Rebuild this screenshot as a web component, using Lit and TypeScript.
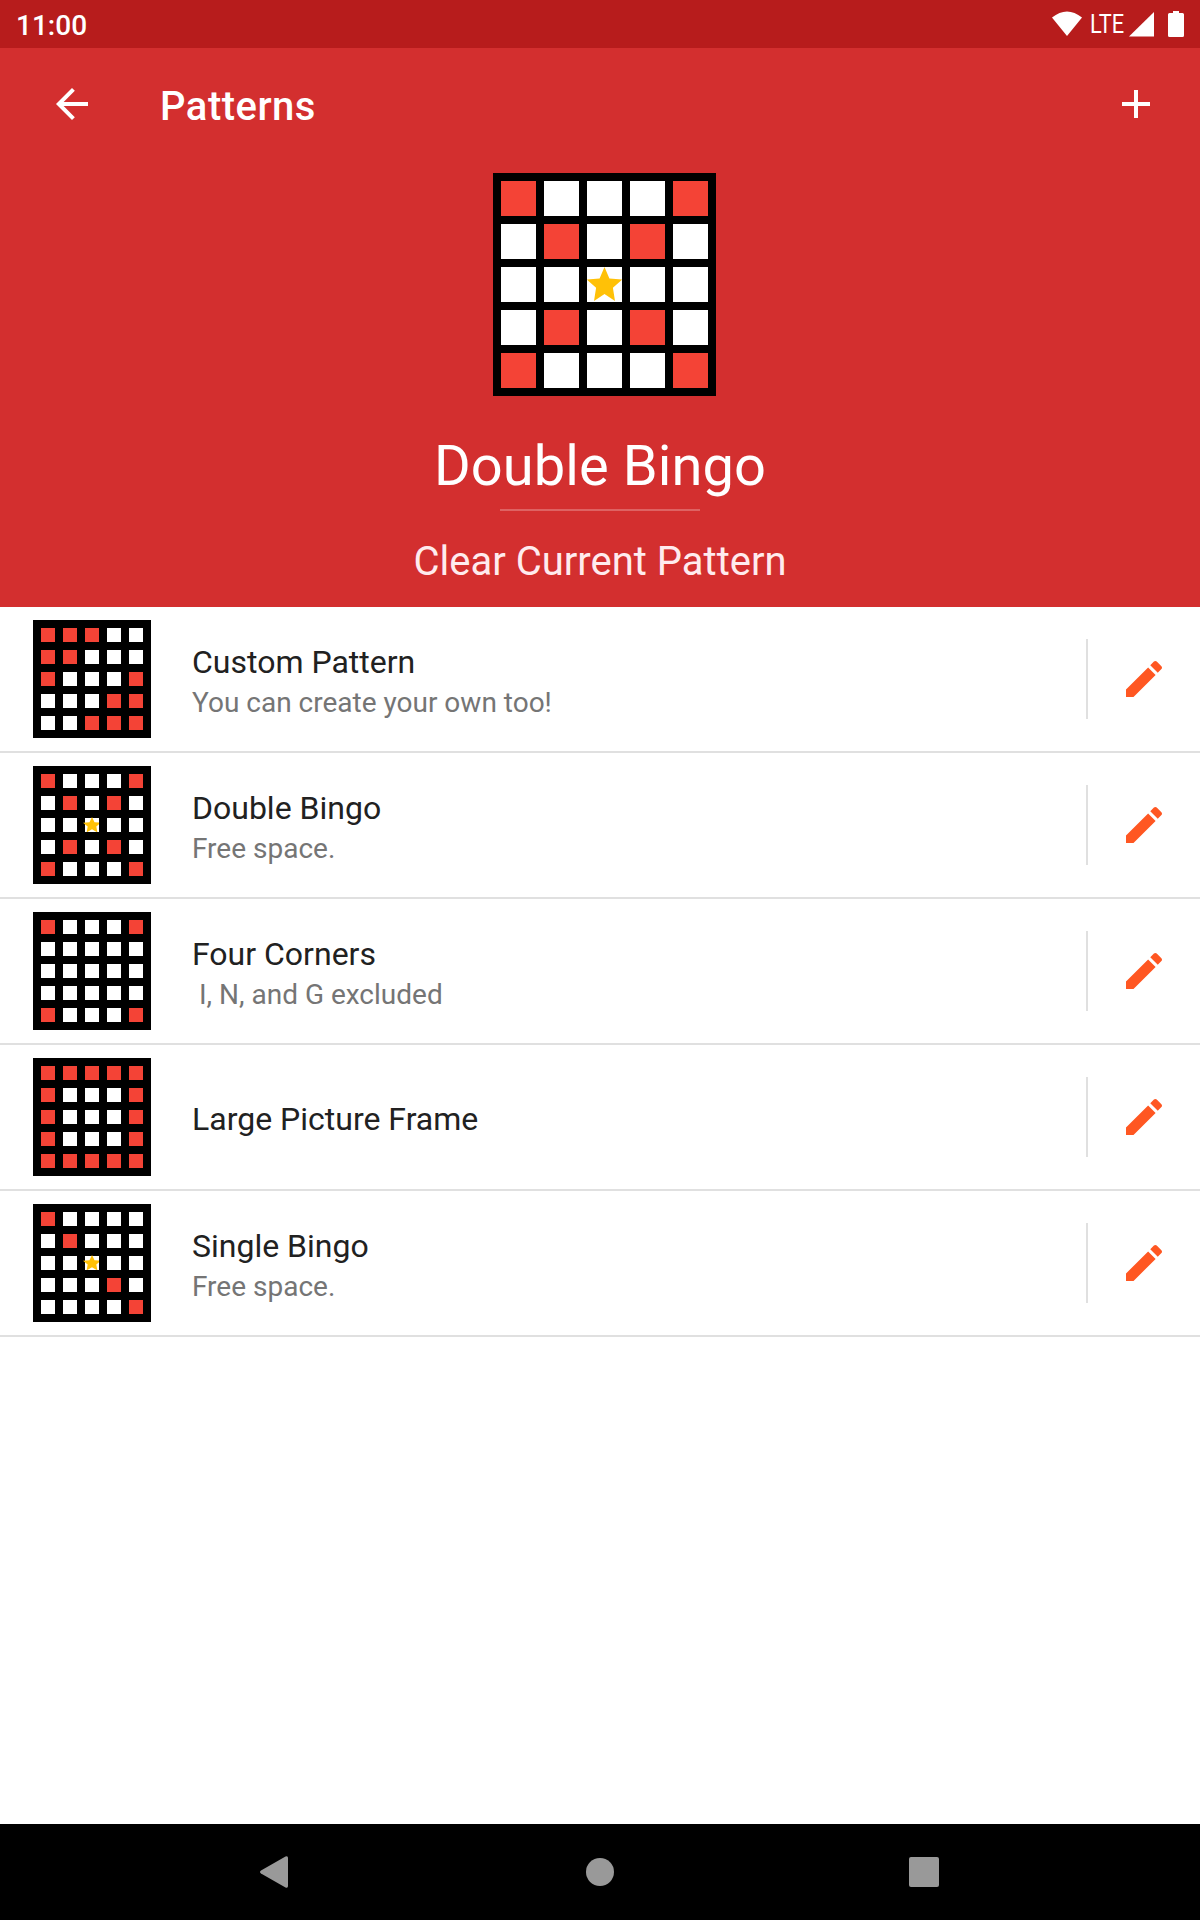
import { LitElement, html, css } from "lit";
import { customElement, property } from "lit/decorators.js";
import { classMap } from "lit/directives/class-map.js";

interface Pattern {
  name: string;
  note?: string;
  cells: string[];
}

// "x" marks a called square, "*" the free space, "." an open square.
const PATTERNS: Pattern[] = [
  { name: "Custom Pattern", note: "You can create your own too!", cells: ["xxx..", "xx...", "x...x", "...xx", "..xxx"] },
  { name: "Double Bingo", note: "Free space.", cells: ["x...x", ".x.x.", "..*..", ".x.x.", "x...x"] },
  { name: "Four Corners", note: " I, N, and G excluded", cells: ["x...x", ".....", ".....", ".....", "x...x"] },
  { name: "Large Picture Frame", cells: ["xxxxx", "x...x", "x...x", "x...x", "xxxxx"] },
  { name: "Single Bingo", note: "Free space.", cells: ["x....", ".x...", "..*..", "...x.", "....x"] },
];

@customElement("pattern-grid")
class PatternGrid extends LitElement {
  @property({ attribute: false }) cells: string[] = [];
  @property({ type: Boolean, reflect: true }) large = false;

  static styles = css`
    :host { display: block; flex: none; --cell: 14px; --star-w: 16px; --star-h: 15px; }
    :host([large]) { --cell: 35px; --star-w: 35px; --star-h: 35px; }
    .grid {
      display: grid;
      grid-template-columns: repeat(5, var(--cell));
      grid-auto-rows: var(--cell);
      gap: 8px;
      padding: 8px;
      background: #000;
    }
    .cell { display: flex; align-items: flex-end; justify-content: flex-end; background: #fff; }
    .called { background: #f44336; }
    .star { flex: none; width: var(--star-w); height: var(--star-h); }
  `;

  render() {
    return html`<div class="grid">
      ${this.cells.join("").split("").map(
        (c) => html`<div class=${classMap({ cell: true, called: c === "x" })}>
          ${c === "*"
            ? html`<svg class="star" preserveAspectRatio="none" viewBox=${this.large ? "0 0 35 35" : "0 0 31.1 33"}>
                <path fill="#ffc107" d="M17.5 0 22.4 11.4 35.2 12.6 25.9 20.7 28 34 17.5 27 7 34 9.1 20.7-.2 12.6 12.6 11.4z" />
              </svg>`
            : ""}
        </div>`
      )}
    </div>`;
  }
}

@customElement("pattern-row")
class PatternRow extends LitElement {
  @property({ attribute: false }) pattern!: Pattern;

  static styles = css`
    :host { display: block; }
    .row { display: flex; align-items: center; height: 144px; padding-left: 33px; border-bottom: 2px solid #e0e0e0; }
    .text { flex: 1; padding: 4px 0 0 41px; }
    .name { font-size: 32px; line-height: 38px; color: #212121; }
    .note { font-size: 28px; line-height: 33px; margin-top: 5px; color: #757575; white-space: pre; }
    .edit { display: flex; align-items: center; justify-content: center; width: 112px; height: 80px; border-left: 2px solid #e0e0e0; }
    svg { width: 48px; height: 48px; }
  `;

  render() {
    const { name, note, cells } = this.pattern;
    return html`<div class="row">
      <pattern-grid .cells=${cells}></pattern-grid>
      <div class="text">
        <div class="name">${name}</div>
        ${note ? html`<div class="note">${note}</div>` : ""}
      </div>
      <div class="edit">
        <svg viewBox="0 0 24 24" fill="#ff5722">
          <path d="M3 17.25V21h3.75L17.81 9.94l-3.75-3.75L3 17.25zM20.71 7.04c.39-.39.39-1.02 0-1.41l-2.34-2.34c-.39-.39-1.02-.39-1.41 0l-1.83 1.83 3.75 3.75 1.83-1.83z" />
        </svg>
      </div>
    </div>`;
  }
}

@customElement("app-root")
class AppRoot extends LitElement {
  static styles = css`
    :host { display: block; font-family: Roboto, "Liberation Sans", sans-serif; }
    .screen { display: flex; flex-direction: column; height: 1920px; background: #fff; overflow: hidden; }
    .status { display: flex; align-items: center; flex: none; height: 48px; background: #b71c1c; color: #fff; }
    .time { flex: 1; padding: 3px 0 0 16px; font-size: 28px; font-weight: 500; line-height: 45px; }
    .status svg { flex: none; height: 48px; }
    .lte { flex: none; width: 35px; margin-left: 8px; padding-top: 2px; font-size: 25px; line-height: 46px; white-space: nowrap; transform: scaleX(0.87); transform-origin: left; }
    .header { flex: none; height: 559px; background: #d32f2f; color: #fff; }
    .bar { display: flex; align-items: center; height: 112px; padding: 0 40px 0 48px; }
    .bar svg { width: 48px; height: 48px; }
    .title { flex: 1; padding: 5px 0 0 64px; font-size: 40px; line-height: 47px; font-weight: 500; letter-spacing: 0.5px; }
    .hero { display: flex; flex-direction: column; align-items: center; padding-top: 13px; }
    .hero pattern-grid { margin-left: 9px; }
    .current { margin-top: 37px; font-size: 56px; line-height: 66px; letter-spacing: 0.1px; }
    .rule { width: 200px; height: 2px; margin-top: 10px; background: rgba(255, 255, 255, 0.25); }
    .clear { margin-top: 27px; font-size: 40px; line-height: 47px; color: #ffebee; }
    .list { flex: 1; }
    .nav { flex: none; height: 96px; background: #000; }
    .nav svg { display: block; width: 1200px; height: 96px; }
  `;

  render() {
    return html`<div class="screen">
      <div class="status">
        <div class="time">11:00</div>
        <svg width="30" viewBox="0 0 30 48" fill="#fff"><path d="M0 17.5Q15 5.500 30 17.500L15 36z" /></svg>
        <span class="lte">LTE</span>
        <svg width="75" viewBox="1125 0 75 48" fill="#fff">
          <path d="M1154 12v24.500h-25z" />
          <path d="M1173 11h6v2h3.500a1.500 1.500 0 0 1 1.500 1.500v21a1.500 1.500 0 0 1-1.500 1.500h-13a1.500 1.500 0 0 1-1.500-1.500v-21a1.500 1.500 0 0 1 1.500-1.500h3.500z" />
        </svg>
      </div>
      <div class="header">
        <div class="bar">
          <svg viewBox="0 0 24 24" fill="#fff"><path d="M20 11H7.830l5.590-5.590L12 4l-8 8 8 8 1.410-1.410L7.830 13H20v-2z" /></svg>
          <div class="title">Patterns</div>
          <svg viewBox="0 0 24 24" fill="#fff"><path d="M19 13h-6v6h-2v-6H5v-2h6V5h2v6h6v2z" /></svg>
        </div>
        <div class="hero">
          <pattern-grid large .cells=${PATTERNS[1].cells}></pattern-grid>
          <div class="current">Double Bingo</div>
          <div class="rule"></div>
          <div class="clear">Clear Current Pattern</div>
        </div>
      </div>
      <div class="list">${PATTERNS.map((p) => html`<pattern-row .pattern=${p}></pattern-row>`)}</div>
      <div class="nav">
        <svg viewBox="0 0 1200 96" fill="#999">
          <path d="M261 46.500 285.500 32.500Q288 31.500 288 34V62Q288 64.500 285.500 63.500L261 49.500Q259 48 261 46.500z" />
          <circle cx="600" cy="48" r="14" />
          <rect x="909" y="33" width="30" height="30" rx="2" />
        </svg>
      </div>
    </div>`;
  }
}
